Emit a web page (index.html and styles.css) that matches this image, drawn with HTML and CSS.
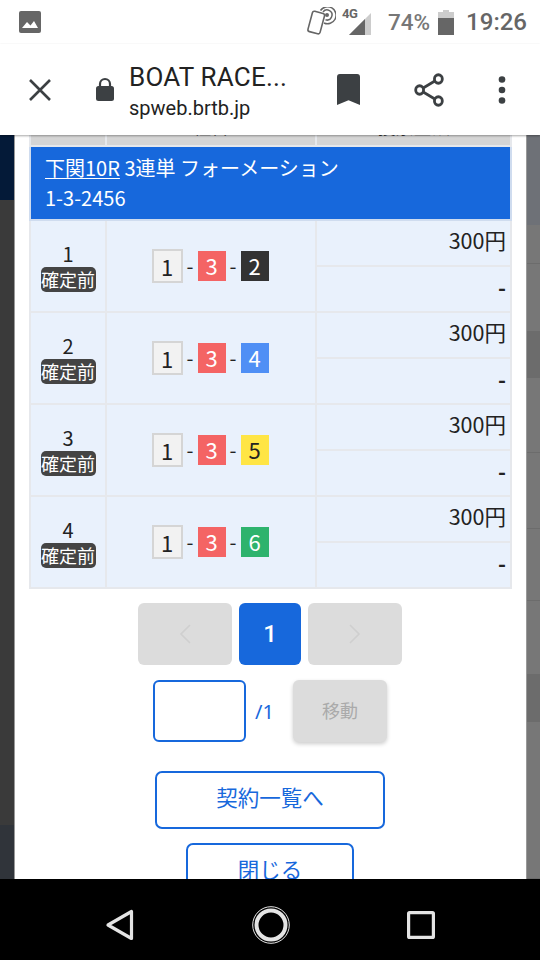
FILE: index.html
```html
<!DOCTYPE html>
<html lang="ja">
<head>
<meta charset="utf-8">
<title>BOAT RACE</title>
<link rel="stylesheet" href="styles.css">
</head>
<body>
<div class="phone">
  <header class="status">
    <svg class="ic-gallery" viewBox="0 0 22 22" width="22" height="22"><rect width="22" height="22" rx="2" fill="#666"/><path d="M3 17l5-6 3.500 3.500L15 10l4 7z" fill="#fff"/></svg>
    <div class="status-right">
      <svg class="ic-nfc" viewBox="0 0 30 30" width="30" height="30" fill="none" stroke="#666"><rect x="4" y="5" width="12.500" height="21" rx="2" transform="rotate(15 10 15.500)" stroke-width="1.600"/><path d="M14.500 3.500a8.500 8.500 0 1 1 3.500 12.500" stroke-width="1.500"/><path d="M17 5a5 5 0 1 1 2.500 7.800" stroke-width="1.500"/><circle cx="21" cy="8" r="2" fill="#666" stroke="none"/></svg>
      <div class="signal">
        <span class="net">4G</span>
        <svg viewBox="0 0 23 24" width="23" height="24"><path d="M0 24L22 2v22z" fill="#ccc"/><path d="M0 24L16 8v16z" fill="#666"/></svg>
      </div>
      <span class="pct">74%</span>
      <svg class="ic-batt" viewBox="0 0 16 25" width="16" height="25"><path d="M5 0h6v2h5v23H0V2h5z" fill="#ccc"/><path d="M0 8h16v17H0z" fill="#666"/></svg>
      <span class="clock">19:26</span>
    </div>
  </header>

  <nav class="toolbar">
    <svg class="ic-close" viewBox="0 0 24 24" width="24" height="24" fill="none" stroke="#3c4043" stroke-width="2.600"><path d="M2 2l20 20M22 2L2 22"/></svg>
    <svg class="ic-lock" viewBox="0 0 18 24" width="18" height="24"><path d="M4 9V7a5 5 0 0 1 10 0v2" fill="none" stroke="#3c4043" stroke-width="2.200"/><rect y="9" width="18" height="15" rx="2.500" fill="#3c4043"/></svg>
    <div class="title-block">
      <div class="title">BOAT RACE...</div>
      <div class="url">spweb.brtb.jp</div>
    </div>
    <svg class="ic-mark" viewBox="0 0 24 32" width="23" height="31" preserveAspectRatio="none"><path d="M3 0h18a3 3 0 0 1 3 3v29l-12-5-12 5V3a3 3 0 0 1 3-3z" fill="#3c4043"/></svg>
    <svg class="ic-share" viewBox="0 0 32 34" width="30" height="34" preserveAspectRatio="none" fill="none" stroke="#3c4043" stroke-width="3"><circle cx="26" cy="6" r="4.200"/><circle cx="6" cy="17" r="4.200"/><circle cx="26" cy="28" r="4.200"/><path d="M9.800 15L22.200 8M9.800 19l12.400 7"/></svg>
    <svg class="ic-more" viewBox="0 0 8 28" width="8" height="28" fill="#3c4043"><circle cx="4" cy="3.500" r="3.300"/><circle cx="4" cy="14" r="3.300"/><circle cx="4" cy="24.500" r="3.300"/></svg>
  </nav>

  <main class="viewport">
    <div class="gutter gutter-left">
      <div class="gl-a"></div><div class="gl-b"></div><div class="gl-c"></div>
    </div>
    <section class="modal">
      <table class="bets">
        <colgroup><col class="c1"><col class="c2"><col class="c3"></colgroup>
        <thead>
          <tr class="head"><th></th><th>組番</th><th>投票金額</th></tr>
          <tr class="race"><th colspan="3"><a class="race-link">下関10R</a> 3連単 フォーメーション<br>1-3-2456</th></tr>
        </thead>
        <tbody>
          <tr class="top"><td rowspan="2" class="no"><div class="n">1</div><span class="badge">確定前</span></td>
            <td rowspan="2" class="combo"><div class="boats"><span class="b b1">1</span><i>-</i><span class="b b3">3</span><i>-</i><span class="b b2">2</span></div></td>
            <td class="amt">300円</td></tr>
          <tr class="bot"><td class="pay">-</td></tr>
          <tr class="top"><td rowspan="2" class="no"><div class="n">2</div><span class="badge">確定前</span></td>
            <td rowspan="2" class="combo"><div class="boats"><span class="b b1">1</span><i>-</i><span class="b b3">3</span><i>-</i><span class="b b4">4</span></div></td>
            <td class="amt">300円</td></tr>
          <tr class="bot"><td class="pay">-</td></tr>
          <tr class="top"><td rowspan="2" class="no"><div class="n">3</div><span class="badge">確定前</span></td>
            <td rowspan="2" class="combo"><div class="boats"><span class="b b1">1</span><i>-</i><span class="b b3">3</span><i>-</i><span class="b b5">5</span></div></td>
            <td class="amt">300円</td></tr>
          <tr class="bot"><td class="pay">-</td></tr>
          <tr class="top"><td rowspan="2" class="no"><div class="n">4</div><span class="badge">確定前</span></td>
            <td rowspan="2" class="combo"><div class="boats"><span class="b b1">1</span><i>-</i><span class="b b3">3</span><i>-</i><span class="b b6">6</span></div></td>
            <td class="amt">300円</td></tr>
          <tr class="bot"><td class="pay">-</td></tr>
        </tbody>
      </table>

      <div class="pager">
        <div class="pg pg-off"><svg viewBox="0 0 14 22" width="14" height="22" fill="none" stroke="#cfcfcf" stroke-width="1.600"><path d="M12 2L3 11l9 9"/></svg></div>
        <div class="pg pg-on">1</div>
        <div class="pg pg-off"><svg viewBox="0 0 14 22" width="14" height="22" fill="none" stroke="#cfcfcf" stroke-width="1.600"><path d="M2 2l9 9-9 9"/></svg></div>
      </div>

      <div class="jump">
        <div class="jump-input"></div>
        <span class="jump-total">/1</span>
        <div class="jump-btn">移動</div>
      </div>

      <div class="btn btn-list">契約一覧へ</div>
      <div class="btn btn-close">閉じる</div>
    </section>
    <div class="gutter gutter-right">
      <div class="gr r1"></div><div class="gr r2"></div><div class="gr r3"></div><div class="gr r4 dark"></div><div class="gr r5"></div><div class="gr r6"></div><div class="gr r7"></div><div class="gr r8"></div><div class="gr r9 dark"></div><div class="gr r10"></div>
    </div>
  </main>

  <footer class="navbar">
    <svg viewBox="0 0 30 32" width="30" height="34" fill="none" stroke="#e4e4e4" stroke-width="3.200" stroke-linejoin="round"><path d="M26.500 2.500v27L3 16z"/></svg>
    <svg viewBox="0 0 38 38" width="38" height="38" fill="none"><circle cx="19" cy="19" r="18.300" stroke="#e4e4e4" stroke-width="1"/><circle cx="19" cy="19" r="14.500" stroke="#e4e4e4" stroke-width="4"/></svg>
    <svg viewBox="0 0 28 28" width="28" height="28" fill="none" stroke="#e4e4e4" stroke-width="3.200" stroke-linejoin="round"><rect x="1.600" y="1.600" width="24.800" height="24.800" rx="1"/></svg>
  </footer>
</div>
</body>
</html>
```
FILE: styles.css
```css
* { box-sizing: border-box; }
html, body { margin: 0; padding: 0; }
body { width: 540px; height: 960px; overflow: hidden; background: #fff; font-family: "Noto Sans CJK JP", "Noto Sans", sans-serif; }
.phone { width: 540px; height: 960px; display: flex; flex-direction: column; }

.status { height: 44px; flex: none; display: flex; align-items: center; justify-content: space-between; padding: 0 13px 0 19px; font-family: Roboto, sans-serif; color: #666; }
.status-right { display: flex; align-items: center; }
.ic-nfc { margin-top: 0; }
.signal { display: flex; align-items: flex-end; margin-left: 13px; height: 26px; position: relative; width: 24px; }
.signal svg { margin-top: 2px; }
.net { position: absolute; left: -7px; top: -3px; font-size: 13px; font-weight: 700; letter-spacing: -.5px; }
.pct { font-size: 22.500px; margin-left: 15px; font-weight: 500; color: #777; }
.ic-batt { margin-left: 8px; margin-top: 1px; }
.clock { font-size: 24px; font-weight: 500; margin-left: 12px; }

.toolbar { height: 91px; flex: none; display: flex; align-items: center; background: #fff; padding-left: 28px; position: relative; z-index: 2; box-shadow: 0 1px 2px rgba(0,0,0,.35); font-family: Roboto, sans-serif; color: #222; }
.ic-close { flex: none; }
.ic-lock { margin-left: 44px; flex: none; margin-top: -2px; }
.title-block { margin-left: 15px; width: 194px; flex: none; margin-top: 5px; }
.title { font-size: 26px; line-height: 32px; letter-spacing: .2px; }
.url { font-size: 20px; line-height: 31px; }
.ic-mark { margin-left: 14px; flex: none; }
.ic-share { margin-left: 54px; flex: none; }
.ic-more { margin-left: 54px; flex: none; }

.viewport { flex: 1; min-height: 0; display: flex; overflow: hidden; position: relative; }
.gutter { width: 15px; flex: none; display: flex; flex-direction: column; }
.gutter-left { border-right: 1px solid #999; }
.gl-a { height: 65px; background: #041a38; }
.gl-b { height: 625px; background: #3a3a3a; }
.gl-c { flex: 1; background: #30343a; }
.gutter-right { width: 14px; border-left: 1px solid #999; }
.gr { background: #777; border-bottom: 1px solid #6c6c6c; }
.r1 { height: 90px; background: #6e7177; border: 0; }
.r2 { height: 39px; }
.r3 { height: 68px; }
.r4 { height: 46px; }
.r5 { height: 75px; }
.r6 { height: 76px; }
.r7 { height: 72px; }
.r8 { height: 74px; }
.r9 { height: 47px; }
.r10 { flex: 1; }
.dark { background: #6c6c6c; }

.modal { flex: 1; min-width: 0; background: #fff; padding: 0 14px 0 13px; display: flex; flex-direction: column; overflow: hidden; }

.bets { width: 481px; margin-left: 1px; table-layout: fixed; border-collapse: collapse; color: #222; margin-top: -23px; flex: none; }
.bets .c1 { width: 76px; }
.bets .c2 { width: 210px; }
.bets .c3 { width: 195px; }
.bets th, .bets td { border: 2px solid #e6e8ec; padding: 0; }
.head th { height: 33px; background: #d5d5d5; font-size: 18px; font-weight: 400; color: #333; line-height: 1; padding-bottom: 7px; }
.race th { height: 74px; background: #1768dc; color: #fff; font-weight: 400; font-size: 20px; line-height: 30px; text-align: left; padding: 5px 14px 6px; border-color: #cfdcef; }
.race-link { text-decoration: underline; text-underline-offset: 2px; text-decoration-thickness: 1px; }
.bets td { background: #e9f1fc; }
.top td { height: 46px; }
.bot td { height: 46px; }
.no { text-align: center; vertical-align: top; padding-top: 20px !important; }
.n { font-size: 20px; line-height: 26px; height: 26px; }
.badge { display: inline-block; width: 55px; height: 25px; line-height: 24px; background: #444; color: #fff; border-radius: 5px; font-size: 18px; vertical-align: top; white-space: nowrap; }
.boats { display: flex; align-items: center; justify-content: center; padding-right: 2px; }
.boats i { font-style: normal; width: 15px; text-align: center; font-size: 20px; line-height: 30px; }
.b { width: 28px; height: 30px; line-height: 29px; text-align: center; font-size: 22px; display: block; }
.b1 { width: 31px; height: 34px; line-height: 31px; background: #f2f2f2; border: 2px solid #d5d5d5; color: #222; }
.b2 { background: #333; color: #fff; }
.b3 { background: #f46464; color: #fff; }
.b4 { background: #4f8ff5; color: #fff; }
.b5 { background: #ffe545; color: #222; }
.b6 { background: #2eb36d; color: #fff; }
.amt, .pay { text-align: right; padding-right: 4px !important; font-size: 21.500px; line-height: 1; }
.amt { padding-bottom: 6px !important; }
.pay { font-weight: 700; padding-bottom: 4px !important; }

.pager { display: flex; justify-content: center; gap: 7px; margin-top: 14px; }
.pg { height: 62px; border-radius: 6px; display: flex; align-items: center; justify-content: center; }
.pg-off { width: 94px; background: #dcdcdc; }
.pg-on { width: 62px; background: #1768dc; color: #fff; font-family: Roboto, sans-serif; font-weight: 500; font-size: 24px; }

.jump { display: flex; align-items: center; margin-top: 15px; padding-left: 125px; }
.jump-input { width: 93px; height: 62px; border: 2px solid #1768dc; border-radius: 6px; background: #fff; flex: none; }
.jump-total { width: 47px; flex: none; padding-left: 9px; color: #1768dc; font-size: 20px; font-family: "Noto Sans", sans-serif; }
.jump-btn { width: 94px; height: 62px; flex: none; background: #dcdcdc; border-radius: 6px; color: #aaa; font-size: 18px; display: flex; align-items: center; justify-content: center; padding-bottom: 3px; box-shadow: 0 2px 4px rgba(0,0,0,.2); }

.btn { flex: none; align-self: center; border: 2px solid #1768dc; border-radius: 7px; color: #1768dc; background: #fff; font-size: 21.500px; display: flex; align-items: center; justify-content: center; height: 58px; padding-bottom: 8px; }
.btn-list { width: 230px; margin-top: 29px; }
.btn-close { width: 168px; margin-top: 14px; }

.navbar { height: 81px; flex: none; background: #000; display: flex; align-items: center; position: relative; z-index: 2; padding: 10px 105px 0; justify-content: space-between; }
.navbar svg { flex: none; }
```
